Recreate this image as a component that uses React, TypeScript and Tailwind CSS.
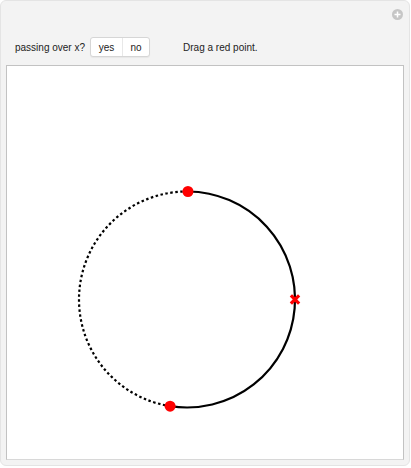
import React from "react";

export default function App() {
  const cx = 180;
  const cy = 233.5;
  const r = 108;
  const pt = (deg: number) => {
    const a = (deg * Math.PI) / 180;
    return { x: cx + r * Math.cos(a), y: cy + r * Math.sin(a) };
  };
  const top = pt(-89.5);
  const bot = pt(99);
  return (
    <div className="w-[411px] h-[468px] bg-white" style={{ fontFamily: '"Liberation Sans", Arial, sans-serif' }}>
      <div className="w-[410px] h-[466px] bg-[#f3f3f3] rounded-[6px] border border-[#e4e4e4] flex flex-col">
        <div className="flex justify-end pt-[8px] pr-[6px] h-[36px]">
          <svg width="11" height="11" viewBox="0 0 11 11">
            <circle cx="5.5" cy="5.5" r="5.5" fill="#c6c6c6" />
            <rect x="2.5" y="4.75" width="6" height="1.5" fill="#fff" />
            <rect x="4.75" y="2.5" width="1.5" height="6" fill="#fff" />
          </svg>
        </div>
        <div className="flex items-center h-[20px] pl-[14px] text-[10px] text-[#222]">
          <span>passing over x?</span>
          <div className="ml-[5px] flex h-[20px] bg-white border border-[#d6d6d6] rounded-[3px] shadow-[0_1px_1px_rgba(0,0,0,0.05)]">
            <div className="w-[32px] flex items-center justify-center border-r border-[#e8e8e8]">yes</div>
            <div className="w-[26px] flex items-center justify-center">no</div>
          </div>
          <span className="ml-[33px]">Drag a red point.</span>
        </div>
        <div className="mt-[8px] mx-[5px] h-[395px] border border-[#c2c2c2] border-b-[#d8d8d8] bg-white">
          <svg width="396" height="393" viewBox="0 0 396 393">
            <path
              d={`M ${top.x} ${top.y} A ${r} ${r} 0 1 1 ${bot.x} ${bot.y}`}
              fill="none"
              stroke="#000"
              strokeWidth="2.2"
            />
            <path
              d={`M ${bot.x} ${bot.y} A ${r} ${r} 0 0 1 ${top.x} ${top.y}`}
              fill="none"
              stroke="#000"
              strokeWidth="2.2"
              strokeDasharray="2.5 2.5"
            />
            <circle cx={top.x} cy={top.y} r="5.5" fill="#ff0000" />
            <circle cx={bot.x} cy={bot.y} r="5.5" fill="#ff0000" />
            <g stroke="#ff0000" strokeWidth="3.2" strokeLinecap="square">
              <line x1={cx + r - 3} y1={cy - 3} x2={cx + r + 3} y2={cy + 3} />
              <line x1={cx + r - 3} y1={cy + 3} x2={cx + r + 3} y2={cy - 3} />
            </g>
          </svg>
        </div>
      </div>
    </div>
  );
}
